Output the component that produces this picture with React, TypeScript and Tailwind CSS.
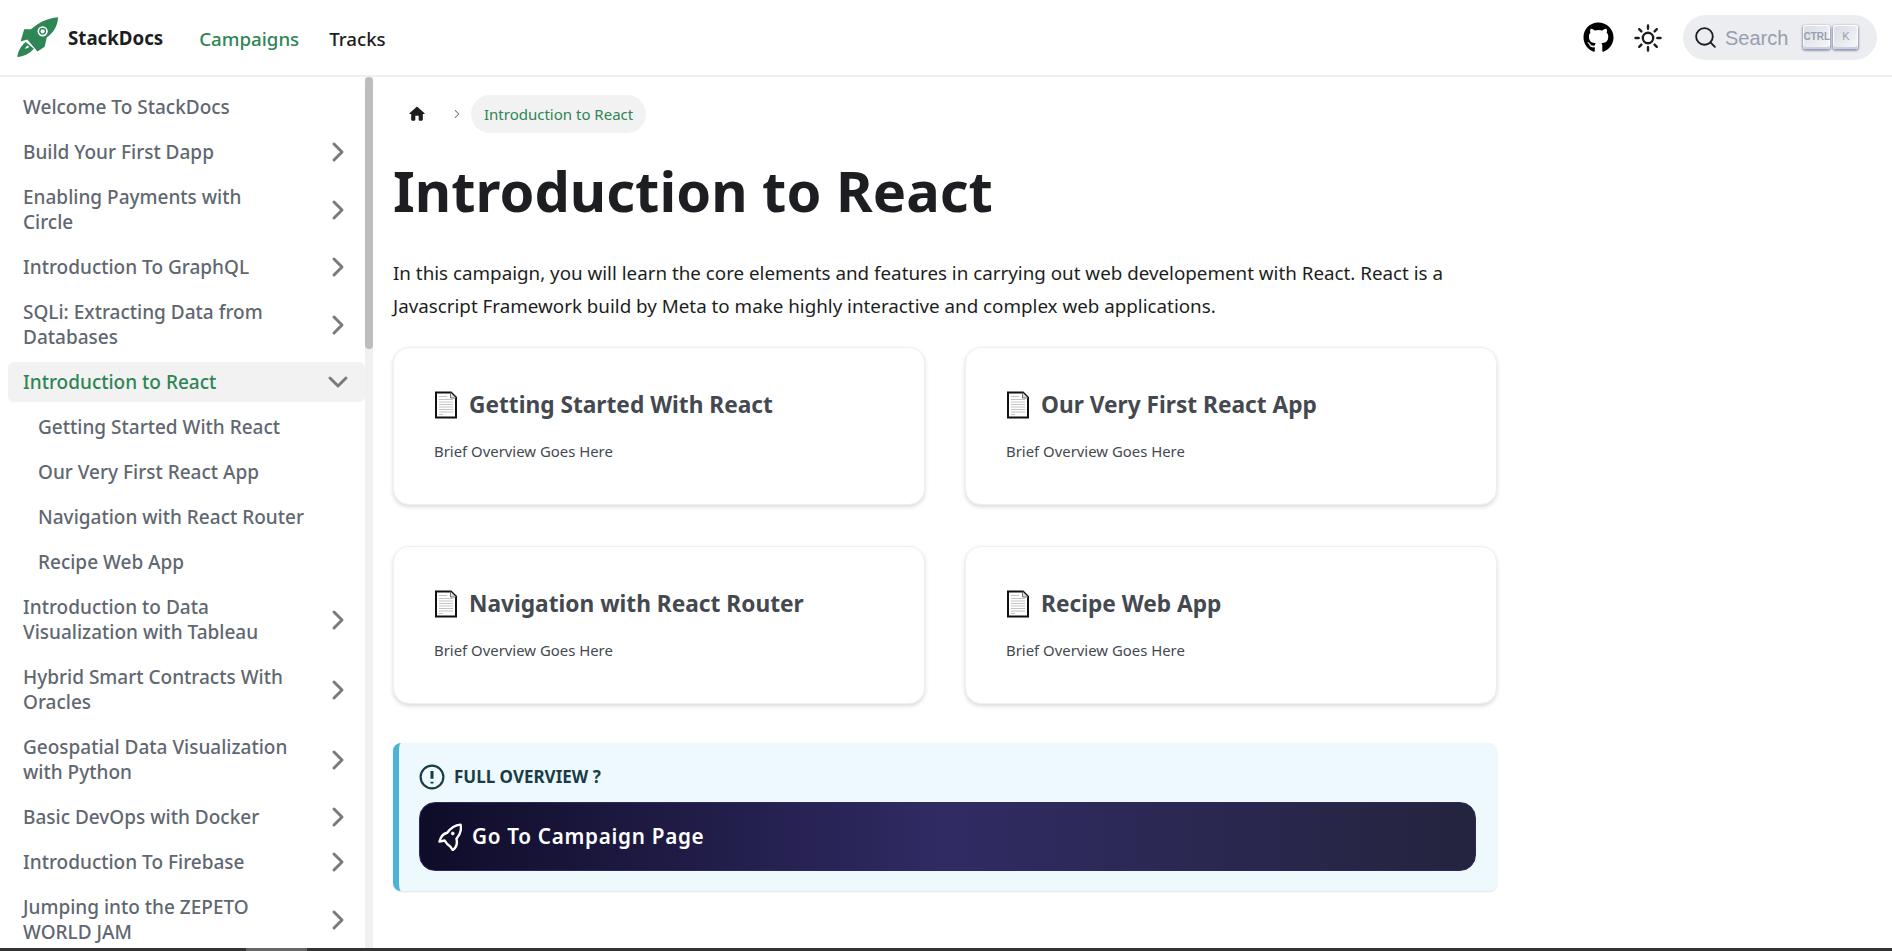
import React from 'react'
import { ChevronRight, ChevronDown, Search } from 'lucide-react'
import { FaGithub } from 'react-icons/fa'

const font = "font-['Noto_Sans','Open_Sans',sans-serif]"

type NavItem = { label: string; arrow?: boolean; active?: boolean; sub?: boolean }

const navItems: NavItem[] = [
  { label: 'Welcome To StackDocs' },
  { label: 'Build Your First Dapp', arrow: true },
  { label: 'Enabling Payments with Circle', arrow: true },
  { label: 'Introduction To GraphQL', arrow: true },
  { label: 'SQLi: Extracting Data from Databases', arrow: true },
  { label: 'Introduction to React', active: true },
  { label: 'Getting Started With React', sub: true },
  { label: 'Our Very First React App', sub: true },
  { label: 'Navigation with React Router', sub: true },
  { label: 'Recipe Web App', sub: true },
  { label: 'Introduction to Data Visualization with Tableau', arrow: true },
  { label: 'Hybrid Smart Contracts With Oracles', arrow: true },
  { label: 'Geospatial Data Visualization with Python', arrow: true },
  { label: 'Basic DevOps with Docker', arrow: true },
  { label: 'Introduction To Firebase', arrow: true },
  { label: 'Jumping into the ZEPETO WORLD JAM', arrow: true }
]

const cards = ['Getting Started With React', 'Our Very First React App', 'Navigation with React Router', 'Recipe Web App']

const Logo = () => (
  <svg viewBox="0 0 40 40" className="w-[41px] h-[41px] shrink-0">
    <path fill="#2e8555" d="M40 0.300C33 1 26 3 20 7L13.500 12 7 12 3.500 24 10 22 20 33.700 27 29 29 20C36 15 40 8 40 0.300Z" />
    <path fill="#2e8555" d="M8.500 24.500L16.500 31C12 36 6 38.800 0.300 39 1 33 4 28 8.500 24.500Z" />
    <path fill="#fff" d="M7.500 31C8.500 29.500 9.500 28.500 10.500 27.800L12 29.200C10.500 30.200 9 30.800 7.500 31Z" />
    <circle cx="25" cy="14" r="5" fill="#fff" />
    <circle cx="25" cy="14" r="3.400" fill="#2e8555" />
    <circle cx="25" cy="14" r="2" fill="#fff" />
  </svg>
)

const SunIcon = () => (
  <svg viewBox="0 0 30 30" className="w-[30px] h-[30px]" fill="none" stroke="#1c1e21" strokeWidth="2.400" strokeLinecap="round">
    <circle cx="15" cy="15" r="5.200" />
    <path d="M15 2.500v3.200M15 24.300v3.200M2.500 15h3.200M24.300 15h3.200M6.200 6.200l2.200 2.200M21.600 21.600l2.200 2.200M6.200 23.800l2.200-2.200M21.600 8.400l2.200-2.200" />
  </svg>
)

const Kbd = ({ children, wide }: { children: React.ReactNode; wide?: boolean }) => (
  <span className={`flex items-center justify-center h-[24px] rounded-[3px] bg-[linear-gradient(-225deg,#d5dbe4,#f8f8f8)] shadow-[inset_0_-2px_0_0_#cdcde6,inset_0_0_1px_1px_#fff,0_1px_2px_1px_rgba(30,35,90,0.4)] text-[#969faf] font-['Liberation_Sans',sans-serif] ${wide ? 'w-[27px] text-[10px] font-bold' : 'w-[25px] text-[11px]'}`}>
    {children}
  </span>
)

const DocIcon = () => (
  <svg viewBox="0 0 22 27" className="ml-[1px] w-[22px] h-[28px] shrink-0">
    <path d="M1 1h15l5 5v20H1z" fill="#fff" stroke="#111" strokeWidth="2" />
    <path d="M15.500 1v5.500h5.500" fill="#ddd" stroke="#555" strokeWidth="0.800" />
    <path d="M4 5h8M4 8h14M4 10.500h14M4 13h14M4 15.500h14M4 18h14M4 20.500h14M4 23h4" stroke="#c4c4c4" strokeWidth="1.200" />
  </svg>
)

const SideRow = ({ item }: { item: NavItem }) => (
  <li className={`flex items-center justify-between rounded-[6px] py-[7.5px] pr-[11px] text-[19px] leading-[25px] font-medium ${item.sub ? 'pl-[30px]' : 'pl-[15px]'} ${item.active ? 'bg-[#f2f2f2] text-[#2e8555]' : 'text-[#606770]'}`}>
    <span className={item.sub ? '' : 'max-w-[268px]'}>{item.label}</span>
    {item.arrow && <ChevronRight className="w-[32px] h-[32px] -my-[4px] text-[#7a7a7a] shrink-0" strokeWidth={2.2} />}
    {item.active && <ChevronDown className="w-[32px] h-[32px] -my-[4px] text-[#7a7a7a] shrink-0" strokeWidth={2.2} />}
  </li>
)

export default function App() {
  return (
    <div className={`h-[951px] overflow-hidden bg-white flex flex-col ${font}`}>
      <header className="h-[77px] shrink-0 flex items-center justify-between border-b-2 border-[#f0f0f0] pl-[17px] pr-[15px]">
        <div className="flex items-center">
          <Logo />
          <span className="ml-[10px] pt-[2px] text-[18.7px] font-bold text-[#1c1e21]">StackDocs</span>
          <span className="ml-[36px] pt-[3px] text-[18.7px] font-medium text-[#2e8555]">Campaigns</span>
          <span className="ml-[30px] pt-[3px] text-[18.7px] font-medium text-[#1c1e21]">Tracks</span>
        </div>
        <div className="flex items-center">
          <FaGithub className="w-[31px] h-[31px] text-black" />
          <span className="ml-[19px]"><SunIcon /></span>
          <div className="ml-[20px] w-[194px] h-[45px] rounded-full bg-[#ebedf0] flex items-center pl-[10px]">
            <Search className="w-[25px] h-[25px] text-[#1c1e21]" strokeWidth={1.8} />
            <span className="ml-[7px] text-[20px] text-[#969faf] font-['Liberation_Sans',sans-serif]">Search</span>
            <div className="ml-[15px] flex gap-[3px] pb-[2px]">
              <Kbd wide>CTRL</Kbd>
              <Kbd>K</Kbd>
            </div>
          </div>
        </div>
      </header>

      <div className="flex flex-1 min-h-0">
        <aside className="w-[373px] shrink-0 flex overflow-hidden">
          <ul className="flex-1 pl-[8px] pt-[10px] flex flex-col gap-[5px]">
            {navItems.map(item => <SideRow key={item.label} item={item} />)}
          </ul>
          <div className="w-[8px] bg-[#f0f0f0] shrink-0">
            <div className="h-[272px] bg-[#bdbdbd] rounded-[4px]" />
          </div>
        </aside>

        <main className="flex-1 min-w-0 pl-[20px] pt-[18px]">
          <div className="w-[1104px]">
            <nav className="flex items-center h-[38px]">
              <svg viewBox="0 0 24 24" className="ml-[14px] w-[20px] h-[20px]" fill="#1c1e21"><path d="M10 19v-5h4v5c0 .55.45 1 1 1h3c.55 0 1-.45 1-1v-7h1.700c.46 0 .68-.57.33-.87L12.670 3.600c-.38-.34-.96-.34-1.340 0l-8.360 7.530c-.34.3-.13.87.33.87H5v7c0 .55.45 1 1 1h3c.55 0 1-.45 1-1z" /></svg>
              <ChevronRight className="ml-[23px] w-[14px] h-[14px] text-[#606770]" strokeWidth={1.8} />
              <span className="ml-[7px] h-[38px] flex items-center rounded-full bg-[#f2f2f2] px-[13px] text-[15px] text-[#2e8555]">Introduction to React</span>
            </nav>

            <h1 className="mt-[19px] text-[56px] leading-[76px] font-bold text-[#1c1e21]">Introduction to React</h1>

            <p className="mt-[29px] text-[18.8px] leading-[33px] text-[#1c1e21]">
              In this campaign, you will learn the core elements and features in carrying out web developement with React. React is a Javascript Framework build by Meta to make highly interactive and complex web applications.
            </p>

            <section className="mt-[24px] grid grid-cols-2 gap-x-[40px] gap-y-[41px]">
              {cards.map(title => (
                <div key={title} className="h-[158px] rounded-[16px] border border-[#f0f0f0] bg-white shadow-[0_2px_4px_rgba(0,0,0,0.15)] pl-[40px] pt-[42px]">
                  <div className="flex items-center gap-[12px] h-[30px]">
                    <DocIcon />
                    <h2 className="text-[22.7px] leading-[30px] font-bold text-[#444950]">{title}</h2>
                  </div>
                  <p className="mt-[21px] text-[14.9px] leading-[20px] text-[#444950]">Brief Overview Goes Here</p>
                </div>
              ))}
            </section>

            <section className="mt-[39px] h-[148px] rounded-[8px] border-l-[6px] border-[#4cb3d4] bg-[#eef9fd] shadow-[0_1px_2px_rgba(0,0,0,0.12)] pl-[20px] pr-[21px] pt-[21px]">
              <div className="flex items-center gap-[9px] h-[25px]">
                <svg viewBox="0 0 24 24" className="w-[26px] h-[26px]" fill="none" stroke="#193c47" strokeWidth="2">
                  <circle cx="12" cy="12" r="10.500" />
                  <path d="M12 6.500v7M12 16.300v1.700" strokeWidth="2.800" />
                </svg>
                <span className="text-[17px] font-bold text-[#193c47]">FULL OVERVIEW ?</span>
              </div>
              <div className="mt-[13px] h-[69px] rounded-[16px] border border-[#2f2a5e] bg-[linear-gradient(90deg,#0f0c29,#302b63,#24243e)] flex items-center pl-[18px]">
                <svg viewBox="0 0 65 75" className="w-[24px] h-[28px] shrink-0" fill="none" stroke="#fff" strokeWidth="6.500" strokeLinejoin="round">
                  <path d="M61 4C50 5 35 12 25 26C15 28 7 38 4 50L18 47C22 54 28 60 33 63L40 73C50 66 53 55 50 42C60 30 64 15 61 4Z" />
                  <circle cx="40" cy="28" r="4" fill="#fff" strokeWidth="2" />
                </svg>
                <span className="ml-[10px] pt-[1px] text-[20.700px] font-semibold tracking-[0.7px] text-white">Go To Campaign Page</span>
              </div>
            </section>
          </div>
        </main>
      </div>

      <div className="h-[3px] shrink-0 bg-[#333] flex">
        <div className="ml-[246px] w-[61px] bg-[#666]" />
      </div>
    </div>
  )
}
